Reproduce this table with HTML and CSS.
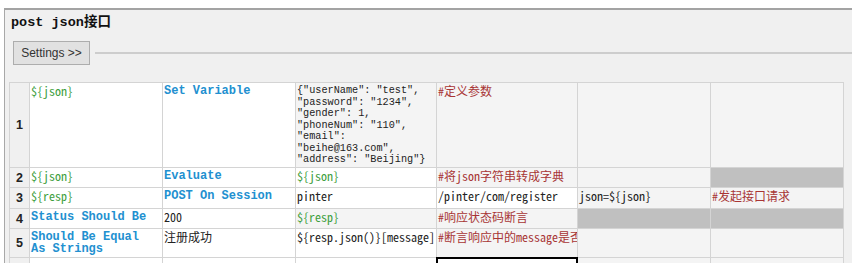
FILE: index.html
```html
<!DOCTYPE html>
<html>
<head>
<meta charset="utf-8">
<link rel="stylesheet" href="styles.css">
</head>
<body>
<div class="panel">
  <div class="title">post json接口</div>
  <div class="settings-row">
    <button class="settings-btn">Settings &gt;&gt;</button>
    <div class="sep"></div>
  </div>
  <div class="grid">
    <div class="c h">1</div>
    <div class="c w var">${json}</div>
    <div class="c w kw">Set Variable</div>
    <div class="c g txt json">{"userName": "test",<br>"password": "1234",<br>"gender": 1,<br>"phoneNum": "110",<br>"email":<br>"beihe@163.com",<br>"address": "Beijing"}</div>
    <div class="c g cm">#定义参数</div>
    <div class="c g"></div>
    <div class="c g"></div>

    <div class="c h">2</div>
    <div class="c w var">${json}</div>
    <div class="c w kw">Evaluate</div>
    <div class="c w var">${json}</div>
    <div class="c g cm">#将json字符串转成字典</div>
    <div class="c g"></div>
    <div class="c d"></div>

    <div class="c h">3</div>
    <div class="c w var">${resp}</div>
    <div class="c w kw">POST On Session</div>
    <div class="c w txt">pinter</div>
    <div class="c w txt">/pinter/com/register</div>
    <div class="c g txt">json=${json}</div>
    <div class="c g cm">#发起接口请求</div>

    <div class="c h">4</div>
    <div class="c w kw">Status Should Be</div>
    <div class="c w txt">200</div>
    <div class="c g var">${resp}</div>
    <div class="c g cm">#响应状态码断言</div>
    <div class="c d"></div>
    <div class="c d"></div>

    <div class="c h">5</div>
    <div class="c w kw">Should Be Equal As Strings</div>
    <div class="c w txt">注册成功</div>
    <div class="c w txt">${resp.json()}[message]</div>
    <div class="c g cm">#断言响应中的message是否</div>
    <div class="c g"></div>
    <div class="c g"></div>

    <div class="c h"></div>
    <div class="c w"></div>
    <div class="c w"></div>
    <div class="c w"></div>
    <div class="c w sel"></div>
    <div class="c g"></div>
    <div class="c g"></div>
  </div>
</div>
</body>
</html>
```

FILE: styles.css
```css
html, body {
  margin: 0;
  padding: 0;
  background: #ffffff;
}

.panel {
  margin: 8px 0 0 4px;
  height: 255px;
  box-sizing: border-box;
  border-top: 2px solid #a3a3a3;
  border-left: 1px solid #a8a8a8;
  background: #f0f0f0;
  overflow: hidden;
}

.title {
  padding: 5px 0 0 6px;
  height: 16px;
  line-height: 16px;
  font-family: "Liberation Mono", "Noto Sans CJK SC", monospace;
  font-weight: bold;
  font-size: 13.5px;
  color: #111;
}

.settings-row {
  display: flex;
  align-items: center;
  margin: 10px 0 0 8px;
}

.settings-btn {
  width: 77px;
  height: 24px;
  box-sizing: border-box;
  border: 1px solid #adadad;
  background: #e1e1e1;
  font-family: "Liberation Sans", Arial, sans-serif;
  font-size: 12px;
  color: #333;
  padding: 0;
  text-align: center;
  border-radius: 0;
}

.sep {
  flex: 1;
  margin-left: 5px;
  height: 0;
  border-top: 2px solid #cdcdcd;
}

.grid {
  display: grid;
  grid-template-columns: 19px 132px 132px 140px 140px 132px 132px;
  grid-template-rows: 84px 19px 20px 19px 28px 20px;
  gap: 1px;
  padding: 1px;
  width: max-content;
  background: #d4d4d4;
  margin: 17px 0 0 4px;
}

.c {
  box-sizing: border-box;
  padding: 2px 1px 0 1px;
  overflow: hidden;
  white-space: nowrap;
  font-family: "Noto Sans Mono CJK SC", "Noto Sans CJK SC", monospace;
  font-size: 12px;
  line-height: 12px;
  color: #222;
}

.json {
  font-family: "Liberation Mono", monospace;
  font-size: 10.2px;
  line-height: 11.5px;
  padding-top: 2px;
}

.w { background: #ffffff; }
.g { background: #f4f4f4; }
.d { background: #c0c0c0; }

.h {
  background: #f0f0f0;
  display: flex;
  align-items: center;
  justify-content: center;
  padding: 0;
  font-family: "Liberation Sans", Arial, sans-serif;
  font-weight: bold;
  font-size: 12.5px;
  color: #222;
}

.var { color: #3d9e3d; }
.cm { color: #a83434; }

.kw {
  font-family: "Liberation Mono", monospace;
  font-weight: bold;
  font-size: 12px;
  line-height: 12px;
  padding-right: 6px;
  color: #2290d0;
  white-space: normal;
}

.sel {
  outline: 2px solid #000;
  outline-offset: -1px;
}
```
